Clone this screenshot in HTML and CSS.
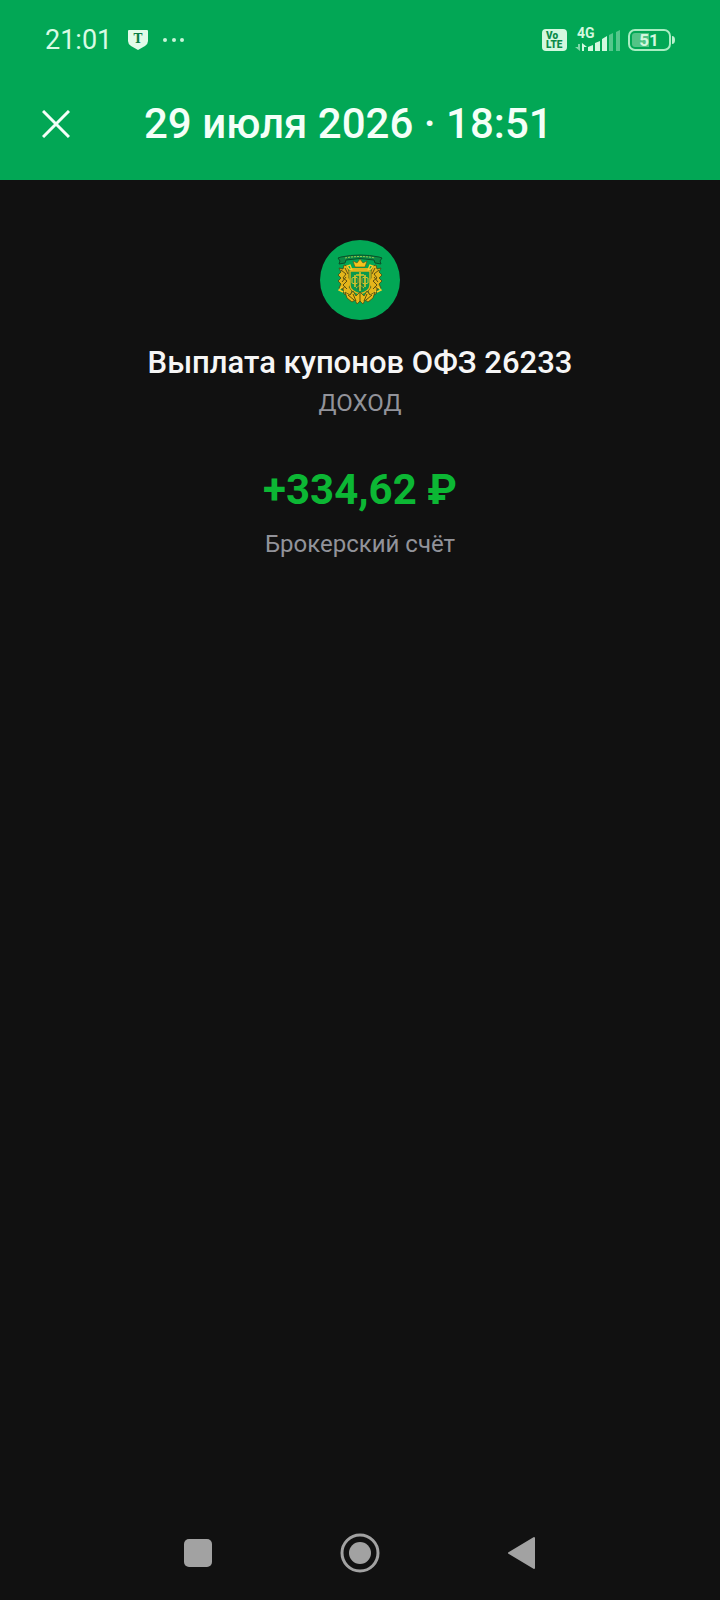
FILE: index.html
```html
<!DOCTYPE html>
<html lang="ru">
<head>
  <meta charset="UTF-8">
  <meta name="viewport" content="width=device-width, initial-scale=1.0">
  <title>Операция</title>
  <link rel="stylesheet" href="styles.css">
</head>
<body>

<header class="top">
  <div class="status">
    <span class="clock">21:01</span>
    <svg class="shield" width="20" height="20" viewBox="0 0 20 20">
      <path d="M1 0h18q1 0 1 1v10q0 3-3 5l-7 4-7-4q-3-2-3-5V1q0-1 1-1z" fill="#e2fbe9"/>
      <text x="10" y="13" text-anchor="middle" class="shield-text">T</text>
    </svg>
    <svg class="more" width="24" height="6" viewBox="0 0 24 6" fill="#c9f5d8">
      <circle cx="3" cy="3" r="2"/>
      <circle cx="12" cy="3" r="2"/>
      <circle cx="20" cy="3" r="2"/>
    </svg>

    <svg class="volte" width="25" height="22" viewBox="0 0 25 22">
      <rect width="25" height="22" rx="4" fill="#d3f8df"/>
      <text x="4" y="10" class="volte-text">Vo</text>
      <text x="4" y="19" class="volte-text">LTE</text>
    </svg>
    <svg class="signal" width="48" height="32" viewBox="0 0 48 32" fill="#d3f8df">
      <text x="2" y="14" class="signal-text">4G</text>
      <g transform="translate(0 4)">
        <path d="M0 19h3v-3h2v7z" opacity=".6"/>
        <path d="M7 15l5 4H9v4H7z"/>
        <path d="M13 19l5-2v6h-5zM20 15l5-2v10h-5zM27 11l5-3v15h-5z"/>
        <path d="M34 7l4-2v18h-4zM41 4l4-2v21h-4z" opacity=".4"/>
      </g>
    </svg>
    <svg class="battery" width="48" height="22" viewBox="0 0 48 22">
      <rect x="1" y="1" width="41" height="20" rx="6" fill="none" stroke="#a9edc2" stroke-width="2"/>
      <path d="M7 4h14v14H7q-3 0-3-3V7q0-3 3-3z" fill="#53c486"/>
      <path d="M44 7q3 0 3 4t-3 4z" fill="#b9f0cd"/>
      <text x="21" y="17" text-anchor="middle" class="battery-text">51</text>
    </svg>
  </div>

  <div class="bar">
    <button class="close" aria-label="Закрыть">
      <svg width="28" height="28" viewBox="0 0 28 28">
        <path d="M1 1l26 26M27 1L1 27" stroke="#f4fff8" stroke-width="3" fill="none"/>
      </svg>
    </button>
    <h1>29 июля 2026 · 18:51</h1>
  </div>
</header>

<main class="operation">
  <div class="logo">
    <svg width="48" height="54" viewBox="0 0 48 54" fill="none">
      <!-- ribbon -->
      <path d="M5 4q19-4 38 0l3 1-2 3 1 3-6-1-1-3q-14-3-28 0l-1 3-6 1 1-3-2-3z" fill="#0b8a45" stroke="#0a4f28"/>
      <path d="M9 5q15-3 30 0" stroke="#a3c94a" stroke-dasharray="2 1"/>
      <!-- crown -->
      <path d="M19 14l-2-6 4 2 3-4 3 4 4-2-2 6z" fill="#f5c31c" stroke="#59501a" stroke-width=".6"/>
      <path d="M15 15h18v3H15z" fill="#d9b31c"/>
      <!-- side figures -->
      <g id="side">
        <path d="M13 18l-2-5-3-1-1 4-4-1 2 4-3 3 3 3-3 3 3 3-2 4 4 1 1 5 6 2 2-5-3-4 3-4-3-5z" fill="#e3b51b" stroke="#3e4a17" stroke-width=".8"/>
        <path d="M5 17l5 4-3 4 4 3-4 4 4 4M9 15l3 6M10 24l-4 5M9 33l-3 4" stroke="#5d4f12"/>
        <path d="M16 17l-2-5-3 1 2 3zM6 34l-3 3 4 2M8 38l4 3" stroke="#f8cf2a" stroke-width="1.4"/>
      </g>
      <use href="#side" transform="matrix(-1 0 0 1 48 0)"/>
      <!-- field -->
      <path d="M14 18h20v14q0 6-10 9-10-3-10-9z" fill="#09994d" stroke="#e3b51b" stroke-width="1.4"/>
      <path d="M24 19v19M19 22v12M29 22v12M20 22h8" stroke="#d8c12c" stroke-width="1.6"/>
      <path d="M16 25q3-2 6 0v5q-3 2-6 0zM26 25q3-2 6 0v5q-3 2-6 0zM20 35l4-3 4 3" stroke="#d8c12c"/>
      <path d="M22 24v13M26 24v13" stroke="#46551a" stroke-width=".7"/>
      <!-- leaves -->
      <path d="M9 39l5 3 3-4 3 5 4-4 4 4 3-5 3 4 5-3-2 6-5 4-3-2-2 4-3-3-3 3-2-4-3 2-5-4z" fill="#e8b91a" stroke="#4c4d16" stroke-width=".8"/>
      <path d="M12 42l6 5M17 41l3 7M24 40v9M31 41l-3 7M36 42l-6 5" stroke="#57500f"/>
    </svg>
  </div>
  <h2>Выплата купонов ОФЗ 26233</h2>
  <p class="kind">ДОХОД</p>
  <p class="amount">+334,62 ₽</p>
  <p class="account">Брокерский счёт</p>
</main>

<nav class="system">
  <button aria-label="Недавние">
    <svg width="40" height="40" viewBox="0 0 40 40"><rect x="6" y="6" width="28" height="28" rx="5" fill="#a2a2a2"/></svg>
  </button>
  <button aria-label="Домой">
    <svg width="40" height="40" viewBox="0 0 40 40">
      <circle cx="20" cy="20" r="18" fill="none" stroke="#a2a2a2" stroke-width="3"/>
      <circle cx="20" cy="20" r="11" fill="#a2a2a2"/>
    </svg>
  </button>
  <button aria-label="Назад">
    <svg width="40" height="40" viewBox="0 0 40 40"><path d="M7 20L32 5v30z" fill="#a2a2a2" stroke="#a2a2a2" stroke-width="2" stroke-linejoin="round"/></svg>
  </button>
</nav>

</body>
</html>
```

FILE: styles.css
```css
* { box-sizing: border-box }

body {
  margin: 0;
  min-height: 100vh;
  display: flex;
  flex-direction: column;
  background: #111111;
  color: #fff;
  font-family: Roboto, "Liberation Sans", sans-serif;
}

h1, h2, p {
  margin: 0;
}

svg {
  display: block;
}

button {
  display: flex;
  align-items: center;
  justify-content: center;
  padding: 0;
  border: 0;
  background: transparent;
  cursor: pointer;
}

/* Header */

.top {
  background: #02a755;
  padding-bottom: 12px;
}

.status {
  display: flex;
  align-items: center;
  height: 80px;
  padding: 0 44px 0 45px;
}

.clock {
  color: #d9fbe4;
  font-size: 27px;
  line-height: 32px;
}

.shield {
  margin-left: 16px;
}

.more {
  margin-left: 14px;
}

.volte {
  margin-left: auto;
}

.signal {
  margin-left: 8px;
}

.battery {
  margin-left: 5px;
}

.shield-text {
  font: bold 12px "DejaVu Serif", serif;
  fill: #0a7f45;
}

.volte-text {
  font: 900 10px Roboto, sans-serif;
  fill: #0a8a48;
}

.signal-text {
  font: bold 14px Roboto, sans-serif;
}

.battery-text {
  font: bold 17px Roboto, sans-serif;
  fill: #d3f8df;
}

.bar {
  display: flex;
  align-items: center;
  height: 88px;
  padding: 0 32px;
}

.close {
  width: 48px;
  height: 48px;
}

.bar h1 {
  margin-left: 64px;
  color: #f4fff8;
  font-size: 42px;
  font-weight: 500;
  line-height: 50px;
}

/* Operation */

.operation {
  flex: 1;
  display: flex;
  flex-direction: column;
  align-items: center;
  padding: 60px 32px;
  text-align: center;
}

.logo {
  display: flex;
  align-items: center;
  justify-content: center;
  width: 80px;
  height: 80px;
  border-radius: 50%;
  background: #02a755;
}

.operation h2 {
  margin-top: 23px;
  color: #f6f6f6;
  font-size: 31px;
  font-weight: 500;
  line-height: 40px;
}

.kind,
.account {
  color: #92939a;
  font-size: 24px;
  line-height: 32px;
}

.kind {
  margin-top: 4px;
}

.amount {
  margin-top: 46px;
  color: #0cb734;
  font-size: 42px;
  font-weight: 700;
  line-height: 50px;
}

.account {
  margin-top: 13px;
}

/* System buttons */

.system {
  display: flex;
  justify-content: center;
  gap: 114px;
  padding-bottom: 23px;
}

.system button {
  width: 48px;
  height: 48px;
}
```
